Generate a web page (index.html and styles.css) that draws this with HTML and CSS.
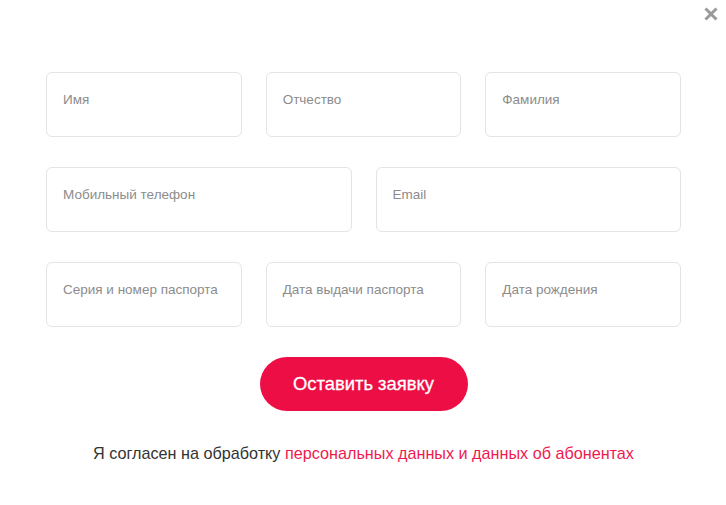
FILE: index.html
```html
<!DOCTYPE html>
<html lang="ru">
<head>
<meta charset="utf-8">
<link rel="stylesheet" href="styles.css">
</head>
<body>
<div class="modal">
  <button class="close" aria-label="Закрыть">
    <svg width="14" height="14" viewBox="0 0 14 14"><path d="M1.5 1.5L12.5 12.5M12.5 1.5L1.5 12.5" stroke="#9a9a9a" stroke-width="3" fill="none"/></svg>
  </button>
  <form class="form">
    <div class="row row-3">
      <div class="field">Имя</div>
      <div class="field">Отчество</div>
      <div class="field">Фамилия</div>
    </div>
    <div class="row row-2">
      <div class="field">Мобильный телефон</div>
      <div class="field">Email</div>
    </div>
    <div class="row row-3">
      <div class="field">Серия и номер паспорта</div>
      <div class="field">Дата выдачи паспорта</div>
      <div class="field">Дата рождения</div>
    </div>
    <div class="actions">
      <button type="button" class="submit">Оставить заявку</button>
    </div>
    <p class="agree">Я согласен на обработку <a href="#" class="link">персональных данных и данных об абонентах</a></p>
  </form>
</div>
</body>
</html>
```

FILE: styles.css
```css
html, body {
  margin: 0;
  padding: 0;
  background: #fff;
  font-family: "Liberation Sans", Arial, sans-serif;
}
.modal {
  position: relative;
  width: 726px;
  height: 505px;
}
.close {
  position: absolute;
  top: 7px;
  right: 8px;
  padding: 0;
  border: 0;
  background: none;
  width: 14px;
  height: 14px;
  display: block;
}
.close svg { display: block; }
.form {
  padding: 72px 45px 0 46px;
  display: flex;
  flex-direction: column;
  gap: 30px;
}
.row {
  display: grid;
  gap: 24px;
}
.row-3 { grid-template-columns: repeat(3, 1fr); }
.row-2 { grid-template-columns: repeat(2, 1fr); }
.field {
  box-sizing: border-box;
  height: 65px;
  border: 1px solid #e4e4e4;
  border-radius: 6px;
  padding: 19px 16px;
  font-size: 13.5px;
  line-height: 16px;
  color: #8c8c8c;
}
.actions {
  display: flex;
  justify-content: center;
}
.submit {
  width: 208px;
  height: 54px;
  border: 0;
  border-radius: 27px;
  background: #ee0e46;
  color: #fff;
  font-family: "Liberation Sans", Arial, sans-serif;
  font-size: 18.4px;
  -webkit-text-stroke: 0.3px #fff;
}
.agree {
  margin: 3px 0 0 0;
  text-align: center;
  font-size: 16.2px;
  line-height: 18px;
  color: #333;
}
.link {
  color: #ee1a4f;
  text-decoration: none;
}
```
